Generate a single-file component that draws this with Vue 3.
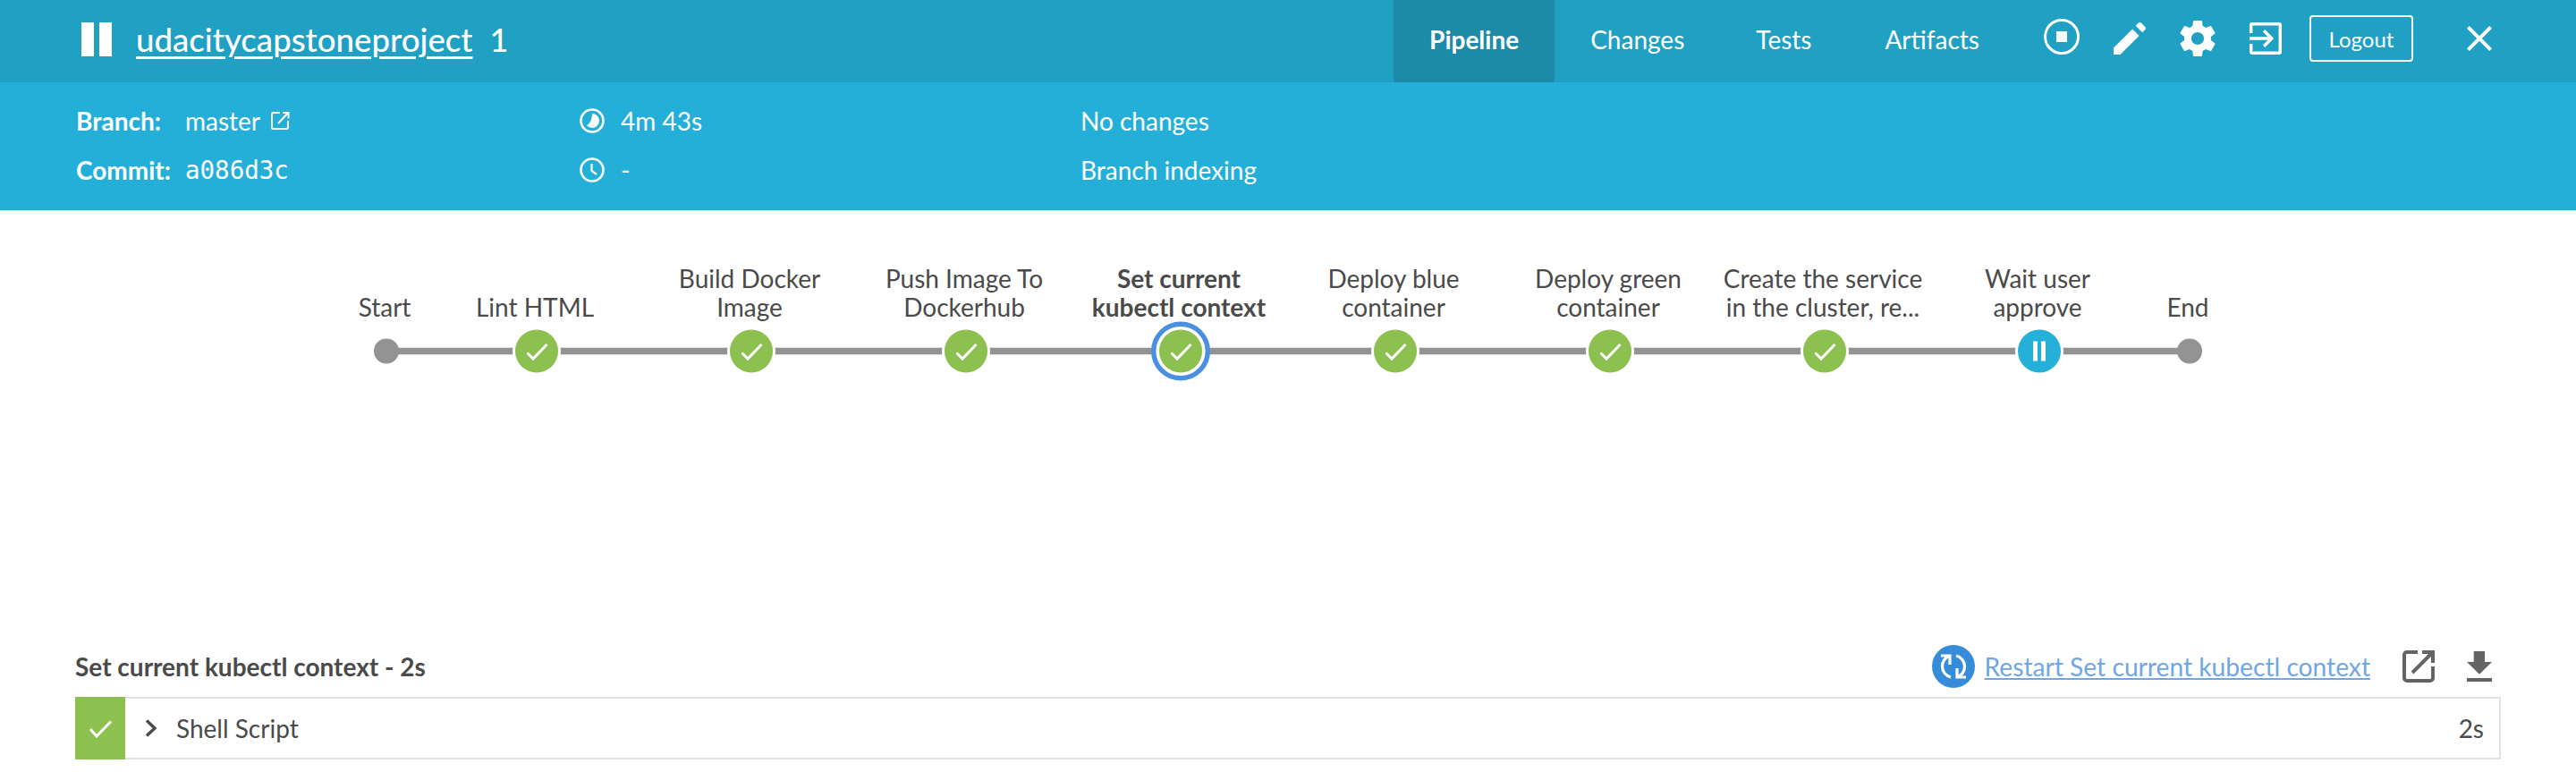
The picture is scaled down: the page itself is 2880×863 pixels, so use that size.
<template>
  <div class="page">
    <header class="top-bar">
      <svg class="pause" width="34" height="38" viewBox="0 0 34 38">
        <rect x="0" y="0" width="14" height="38" fill="#fff" />
        <rect x="20" y="0" width="14" height="38" fill="#fff" />
      </svg>
      <a class="title">udacitycapstoneproject</a>
      <span class="run-id">1</span>

      <nav class="tabs">
        <a v-for="tab in tabs" :key="tab" class="tab" :class="{ active: tab === 'Pipeline' }">{{ tab }}</a>
      </nav>

      <div class="actions">
        <svg class="stop" width="48" height="48" viewBox="0 0 48 48">
          <circle cx="24" cy="24" r="18.5" fill="none" stroke="#fff" stroke-width="3" />
          <rect x="18" y="18" width="12" height="12" fill="#fff" />
        </svg>
        <svg width="48" height="48" viewBox="0 0 24 24">
          <path fill="#fff" d="M3 17.25V21h3.75L17.3 10.45l-3.75-3.75L3 17.25zM20.71 7.04c.39-.39.39-1.02 0-1.41l-2.34-2.34c-.39-.39-1.02-.39-1.41 0l-1.6 1.6 3.75 3.75 1.6-1.6z" />
        </svg>
        <svg width="48" height="48" viewBox="0 0 24 24">
          <path fill="#fff" d="M19.43 12.98c.04-.32.07-.64.07-.98s-.03-.66-.07-.98l2.11-1.65c.19-.15.24-.42.12-.64l-2-3.46c-.12-.22-.39-.3-.61-.22l-2.49 1c-.52-.4-1.08-.73-1.69-.98l-.38-2.65C14.46 2.18 14.25 2 14 2h-4c-.25 0-.46.18-.49.42l-.38 2.65c-.61.25-1.17.59-1.69.98l-2.49-1c-.23-.09-.49 0-.61.22l-2 3.46c-.13.22-.07.49.12.64l2.11 1.65c-.04.32-.07.65-.07.98s.03.66.07.98l-2.11 1.65c-.19.15-.24.42-.12.64l2 3.46c.12.22.39.3.61.22l2.49-1c.52.4 1.08.73 1.69.98l.38 2.65c.03.24.24.42.49.42h4c.25 0 .46-.18.49-.42l.38-2.65c.61-.25 1.17-.59 1.69-.98l2.49 1c.23.09.49 0 .61-.22l2-3.46c.12-.22.07-.49-.12-.64l-2.11-1.65zM12 15.5c-1.93 0-3.5-1.57-3.5-3.5s1.57-3.5 3.5-3.5 3.5 1.57 3.5 3.5-1.57 3.5-3.5 3.5z" />
        </svg>
        <svg class="exit" width="48" height="48" viewBox="0 0 24 24">
          <path fill="none" stroke="#fff" stroke-width="1.7" d="M3.85 9V4.6c0-.4.35-.75.75-.75h14.8c.4 0 .75.35.75.75v14.8c0 .4-.35.75-.75.75H4.6c-.4 0-.75-.35-.75-.75V15M3 12h12.6M11 7.6l4.4 4.4-4.4 4.4" />
        </svg>
        <button class="logout">Logout</button>
        <svg width="48" height="48" viewBox="0 0 24 24">
          <path fill="#fff" d="M19 6.41L17.59 5 12 10.59 6.41 5 5 6.41 10.59 12 5 17.59 6.41 19 12 13.41 17.59 19 19 17.59 13.41 12z" />
        </svg>
      </div>
    </header>

    <section class="info-bar">
      <div class="info-col first">
        <div class="info-row">
          <b class="key">Branch:</b>
          <span>master</span>
          <svg class="ext" width="22" height="22" viewBox="0 0 22 22">
            <path d="M11 2H3.5A1.5 1.5 0 0 0 2 3.5v15A1.5 1.5 0 0 0 3.5 20h15a1.5 1.5 0 0 0 1.5-1.5V11" fill="none" stroke="#fff" stroke-width="2" />
            <path d="M20.5 1.5L9 14M14 2h6.5v6.5" fill="none" stroke="#fff" stroke-width="2" />
          </svg>
        </div>
        <div class="info-row">
          <b class="key">Commit:</b>
          <span class="mono">a086d3c</span>
        </div>
      </div>
      <div class="info-col second">
        <div class="info-row">
          <svg class="info-icon" width="28" height="28" viewBox="0 0 28 28">
            <circle cx="14" cy="14" r="12.5" fill="none" stroke="#fff" stroke-width="2.6" />
            <path d="M14 6a8 8 0 0 1 0 16 8 8 0 0 1-6.2-3C11 18 14 13 14 6z" fill="#fff" />
          </svg>
          <span>4m 43s</span>
        </div>
        <div class="info-row">
          <svg class="info-icon" width="28" height="28" viewBox="0 0 28 28">
            <circle cx="14" cy="14" r="12.5" fill="none" stroke="#fff" stroke-width="2.6" />
            <path d="M13.5 7v8l5.5 4" fill="none" stroke="#fff" stroke-width="2.2" />
          </svg>
          <span>-</span>
        </div>
      </div>
      <div class="info-col">
        <div class="info-row">No changes</div>
        <div class="info-row">Branch indexing</div>
      </div>
    </section>

    <section class="graph">
      <div class="labels">
        <div
          v-for="stage in stages"
          :key="stage.x"
          class="label"
          :class="{ selected: stage.selected }"
        >
          <span v-for="line in stage.lines" :key="line">{{ line }}</span>
        </div>
      </div>
      <svg class="graph-svg" width="2112" height="72" viewBox="0 0 2112 72">
        <line x1="48" y1="33.5" x2="2064" y2="33.5" stroke="#949393" stroke-width="7.6" />
        <g v-for="stage in stages" :key="stage.x" :transform="`translate(${stage.x - 384} 33.5)`">
          <circle v-if="stage.kind === 'edge'" r="14" fill="#949393" />
          <template v-else>
            <circle v-if="stage.selected" r="30.3" fill="#fff" stroke="#4a90e2" stroke-width="5.4" />
            <circle v-else r="27" fill="#fff" />
            <circle r="24" :fill="stage.kind === 'paused' ? '#24b0d9' : '#8cc04f'" />
            <path v-if="stage.kind === 'ok'" d="M-10.5 2L-4 8.5 11.5-7.5" fill="none" stroke="#fff" stroke-width="3" />
            <g v-else fill="#fff">
              <rect x="-7" y="-11" width="5" height="22" />
              <rect x="2" y="-11" width="5" height="22" />
            </g>
          </template>
        </g>
      </svg>
    </section>

    <section class="detail">
      <div class="detail-head">
        <h2>Set current kubectl context - 2s</h2>
        <svg width="48" height="48" viewBox="0 0 48 48">
          <circle cx="24" cy="24" r="24" fill="#368cd9" />
          <g fill="none" stroke="#fff" stroke-width="3.2">
            <path d="M21 36A12.5 12.5 0 0 1 20 12M10 12h10v10" />
            <path d="M27 12A12.5 12.5 0 0 1 28 36M38 36H28V26" />
          </g>
        </svg>
        <a class="restart-link">Restart Set current kubectl context</a>
        <svg class="popout" width="36" height="36" viewBox="0 0 36 36">
          <path d="M17 2H5a3 3 0 0 0-3 3v26a3 3 0 0 0 3 3h26a3 3 0 0 0 3-3V18" fill="none" stroke="#646464" stroke-width="4" />
          <path d="M11 25L34 2M22 2h12v12" fill="none" stroke="#646464" stroke-width="4" />
        </svg>
        <svg class="download" width="28" height="34" viewBox="0 0 28 34">
          <path d="M7.7 0H20v12h8L14 25.7 0 12h7.7zM0 30h28v4H0z" fill="#646464" />
        </svg>
      </div>
      <div class="step">
        <div class="step-status">
          <svg width="28" height="22" viewBox="-14 -11 28 22">
            <path d="M-11 1L-4 9 12-7.5" fill="none" stroke="#fff" stroke-width="3" />
          </svg>
        </div>
        <svg class="chevron" width="14" height="20" viewBox="0 0 14 20">
          <path d="M2 1.5l9 8.5-9 8.5" fill="none" stroke="#4a4a4a" stroke-width="3.4" />
        </svg>
        <span class="step-name">Shell Script</span>
        <span class="step-time">2s</span>
      </div>
    </section>
  </div>
</template>

<script setup>
const tabs = ['Pipeline', 'Changes', 'Tests', 'Artifacts'];

const stages = [
  { lines: ['Start'], x: 432, kind: 'edge' },
  { lines: ['Lint HTML'], x: 600, kind: 'ok' },
  { lines: ['Build Docker', 'Image'], x: 840, kind: 'ok' },
  { lines: ['Push Image To', 'Dockerhub'], x: 1080, kind: 'ok' },
  { lines: ['Set current', 'kubectl context'], x: 1320, kind: 'ok', selected: true },
  { lines: ['Deploy blue', 'container'], x: 1560, kind: 'ok' },
  { lines: ['Deploy green', 'container'], x: 1800, kind: 'ok' },
  { lines: ['Create the service', 'in the cluster, re...'], x: 2040, kind: 'ok' },
  { lines: ['Wait user', 'approve'], x: 2280, kind: 'paused' },
  { lines: ['End'], x: 2448, kind: 'edge' }
];
</script>

<style scoped>
.page {
  width: 2880px;
  height: 863px;
  overflow: hidden;
  background: #fff;
  font-family: Lato, "Open Sans", sans-serif;
  color: #4a4a4a;
}

.top-bar {
  height: 92px;
  background: #20a0c3;
  display: flex;
  align-items: center;
  color: #fff;
  padding-left: 91px;
}

.pause {
  margin-right: 27px;
  margin-bottom: 4px;
}

.title {
  font-size: 36.6px;
  font-weight: 500;
  margin-bottom: 4px;
  text-decoration: underline;
  text-underline-offset: 5px;
  text-decoration-thickness: 3px;
}

.run-id {
  font-size: 36px;
  font-weight: 500;
  margin-left: 19px;
  margin-bottom: 4px;
}

.tabs {
  display: flex;
  align-self: stretch;
  margin-left: auto;
}

.tab {
  padding: 0 40px 5px;
  display: flex;
  align-items: center;
  font-size: 28px;
}

.tab:last-child {
  padding-left: 42px;
}

.tab.active {
  width: 180px;
  box-sizing: border-box;
  padding-left: 0;
  padding-right: 0;
  justify-content: center;
  background: #1d8aa8;
  font-weight: 700;
}

.actions {
  display: flex;
  align-items: center;
  gap: 28px;
  margin-left: 28px;
  margin-right: 84px;
  padding-bottom: 6px;
}

.stop {
  margin-bottom: 4px;
}

.exit {
  margin-right: -3px;
}

.logout {
  width: 116px;
  height: 52px;
  border: 2px solid #fff;
  border-radius: 4px;
  background: transparent;
  color: #fff;
  font: 24px Lato, sans-serif;
  padding: 0;
  margin-right: 22px;
}

.info-bar {
  height: 143px;
  background: #24afd9;
  color: #fff;
  font-size: 28px;
  display: flex;
  padding-top: 23px;
  box-sizing: border-box;
}

.info-col {
  display: flex;
  flex-direction: column;
  gap: 15px;
}

.info-row {
  height: 40px;
  display: flex;
  align-items: center;
}

.first {
  width: 563px;
  margin-left: 85px;
}

.second {
  width: 560px;
}

.key {
  width: 122px;
  font-weight: 700;
}

.ext {
  margin-left: 11px;
}

.mono {
  font-family: "DejaVu Sans Mono", monospace;
  font-size: 27.5px;
}

.info-icon {
  margin-right: 18px;
}

.graph {
  padding-left: 384px;
  padding-top: 60px;
}

.labels {
  display: grid;
  grid-template-columns: 96px repeat(8, 240px) 96px;
  height: 64px;
  margin-left: -2px;
  align-items: end;
  font-size: 28px;
  line-height: 32px;
  text-align: center;
}

.label {
  display: flex;
  flex-direction: column;
  align-items: center;
  white-space: nowrap;
}

.label.selected {
  font-weight: 700;
}

.graph-svg {
  display: block;
}

.detail {
  padding: 0 84px;
  margin-top: 290px;
}

.detail-head {
  display: flex;
  align-items: center;
  height: 48px;
}

.detail-head h2 {
  margin: 0 auto 0 0;
  font-size: 28px;
  font-weight: 700;
}

.restart-link {
  margin-left: 11px;
  font-size: 28.2px;
  color: #6ea6e8;
  text-decoration: underline;
}

.popout {
  margin-left: 36px;
}

.download {
  margin-left: 36px;
  margin-right: 10px;
}

.step {
  margin-top: 10px;
  height: 70px;
  box-sizing: border-box;
  border: 2px solid #e2e2e2;
  border-left: 0;
  display: flex;
  align-items: center;
  font-size: 28px;
}

.step-status {
  width: 56px;
  align-self: stretch;
  margin: -2px 0;
  background: #8cc04f;
  display: flex;
  align-items: center;
  justify-content: center;
}

.chevron {
  margin-left: 22px;
}

.step-name {
  margin-left: 21px;
}

.step-time {
  margin-left: auto;
  margin-right: 17px;
}
</style>

<style>
body {
  margin: 0;
}
</style>
